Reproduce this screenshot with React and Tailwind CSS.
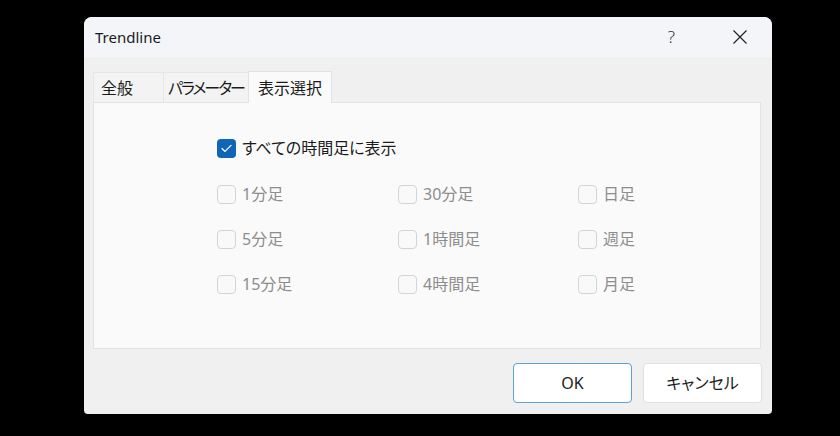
import { useState } from 'react';

const font = "font-['Noto_Sans','Noto_Sans_CJK_JP',sans-serif] [font-feature-settings:'palt']";

const tabs = [
  { label: '全般', extra: 'w-[70px] px-[7px]' },
  { label: 'パラメーター', extra: 'px-[4px] tracking-[-2px]' },
  { label: '表示選択', extra: 'px-[9px]' },
];

const timeframes = [
  ['1分足', '30分足', '日足'],
  ['5分足', '1時間足', '週足'],
  ['15分足', '4時間足', '月足'],
];

function Checkbox({ checked }) {
  if (checked) {
    return (
      <span className="flex h-[19px] w-[19px] items-center justify-center rounded-[4px] bg-[#0f65b8]">
        <svg width="11" height="9" viewBox="0 0 11 9" fill="none">
          <path d="M1 4.6 L4 7.4 L10 1.4" stroke="white" strokeWidth="1.3" strokeLinecap="round" strokeLinejoin="round" />
        </svg>
      </span>
    );
  }
  return <span className="h-[19px] w-[19px] rounded-[4px] border border-[#d4d4d4] bg-[#f9f9f9]" />;
}

export default function App() {
  const [active] = useState(2);

  return (
    <div className={`h-[436px] w-[840px] overflow-hidden bg-black pl-[84px] pt-[17px] ${font}`}>
      <div className="flex h-[397px] w-[688px] flex-col overflow-hidden rounded-t-[8px] rounded-b-[4px] bg-[#f0f0f0]">
        <div className="flex h-[40px] items-center bg-[#f3f5f9] pl-[11px] pr-[24px]">
          <span className="text-[15px] text-[#1b1b1b]">Trendline</span>
          <span className="ml-auto text-[17px] font-light text-[#333]">?</span>
          <svg className="ml-[57px]" width="16" height="16" viewBox="0 0 16 16" fill="none">
            <path d="M1.5 1.5 L14.5 14.5 M14.5 1.5 L1.5 14.5" stroke="#222" strokeWidth="1.2" />
          </svg>
        </div>

        <div className="flex flex-1 flex-col pl-[9px] pr-[11px] pt-[14px]">
          <div className="flex h-[31px] items-end">
            {tabs.map((tab, i) => (
              <div
                key={tab.label}
                className={
                  i === active
                    ? `relative z-10 -mb-px flex h-[32px] items-center border-x border-t border-[#e3e3e3] bg-[#fafafa] text-[16px] text-[#1b1b1b] ${tab.extra}`
                    : `flex h-[30px] items-center border-l border-t border-[#e6e6e6] bg-[#f3f3f3] text-[16px] text-[#1b1b1b] ${tab.extra}`
                }
              >
                {tab.label}
              </div>
            ))}
          </div>

          <div className="h-[247px] border border-[#e3e3e3] bg-[#fafafa] pl-[123px] pt-[36px]">
            <div className="flex h-[19px] items-center gap-[6px]">
              <Checkbox checked />
              <span className="text-[16px] leading-[19px] text-[#1b1b1b]">すべての時間足に表示</span>
            </div>
            <div className="mt-[27px] flex flex-col gap-[26px]">
              {timeframes.map((row) => (
                <div key={row[0]} className="grid grid-cols-[181px_180px_120px]">
                  {row.map((label) => (
                    <div key={label} className="flex h-[19px] items-center gap-[6px]">
                      <Checkbox />
                      <span className="text-[16px] leading-[19px] text-[#8d8d8d]">{label}</span>
                    </div>
                  ))}
                </div>
              ))}
            </div>
          </div>

          <div className="-mr-px mt-[14px] flex justify-end gap-[11px]">
            <button className="h-[40px] w-[119px] rounded-[4px] border border-[#5aa3d9] bg-white text-[16px] text-[#1b1b1b]">
              OK
            </button>
            <button className="h-[40px] w-[119px] rounded-[4px] border border-[#e0e0e0] bg-white text-[16px] text-[#1b1b1b]">
              キャンセル
            </button>
          </div>
        </div>
      </div>
    </div>
  );
}
